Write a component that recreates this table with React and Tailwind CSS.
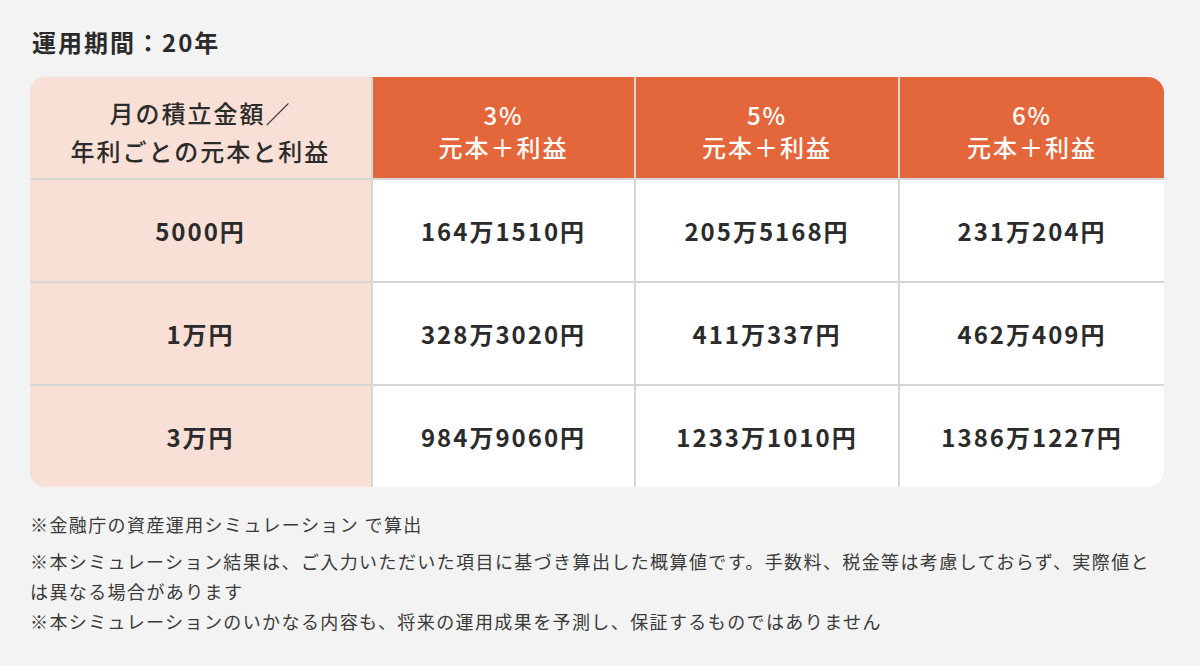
const rates = ["3%", "5%", "6%"];

const rows = [
  { monthly: "5000円", values: ["164万1510円", "205万5168円", "231万204円"] },
  { monthly: "1万円", values: ["328万3020円", "411万337円", "462万409円"] },
  { monthly: "3万円", values: ["984万9060円", "1233万1010円", "1386万1227円"] },
];

const font = { fontFamily: '"Noto Sans CJK JP", "Noto Sans", sans-serif' };

export default function App() {
  return (
    <div className="w-full h-[666px] bg-[#f3f3f3] pl-[30px] pt-[28px] text-[#2b2b2b]" style={font}>
      <h2 className="text-[24px] font-bold leading-[28px] tracking-[2px] pl-[2px]">運用期間：20年</h2>

      {/* table: 2px gaps on a grey ground draw the inner rules */}
      <div className="mt-[21px] w-[1134px] grid grid-cols-[341px_261px_262px_264px] grid-rows-[101px_101px_101px_101px] gap-[2px] bg-[#d6d6d6] rounded-2xl overflow-hidden">
        <div className="bg-[#f9e0d6] flex items-center justify-center text-center text-[24px] font-medium leading-[38px] tracking-[2px] pt-[8px]">
          <p>
            月の積立金額／
            <br />
            年利ごとの元本と利益
          </p>
        </div>
        {rates.map((r) => (
          <div
            key={r}
            className="bg-[#e4673c] text-white flex items-center justify-center text-center text-[24px] font-medium leading-[32px] tracking-[2px] pt-[6px]"
          >
            <p>
              {r}
              <br />
              元本＋利益
            </p>
          </div>
        ))}

        {rows.map((row) => (
          <Row key={row.monthly} row={row} />
        ))}
      </div>

      <div className="mt-[22px] w-[1134px] text-[18px] leading-[30px] tracking-[1.4px] text-[#3a3a3a]">
        <p>※金融庁の資産運用シミュレーション で算出</p>
        <p className="mt-[7px]">
          ※本シミュレーション結果は、ご入力いただいた項目に基づき算出した概算値です。手数料、税金等は考慮しておらず、実際値とは異なる場合があります
        </p>
        <p>※本シミュレーションのいかなる内容も、将来の運用成果を予測し、保証するものではありません</p>
      </div>
    </div>
  );
}

function Row({ row }) {
  return (
    <>
      <div className="bg-[#f9e0d6] flex items-center justify-center text-[24px] font-bold tracking-[2px]">
        {row.monthly}
      </div>
      {row.values.map((v, i) => (
        <div key={i} className="bg-white flex items-center justify-center text-[24px] font-bold tracking-[2px]">
          {v}
        </div>
      ))}
    </>
  );
}
